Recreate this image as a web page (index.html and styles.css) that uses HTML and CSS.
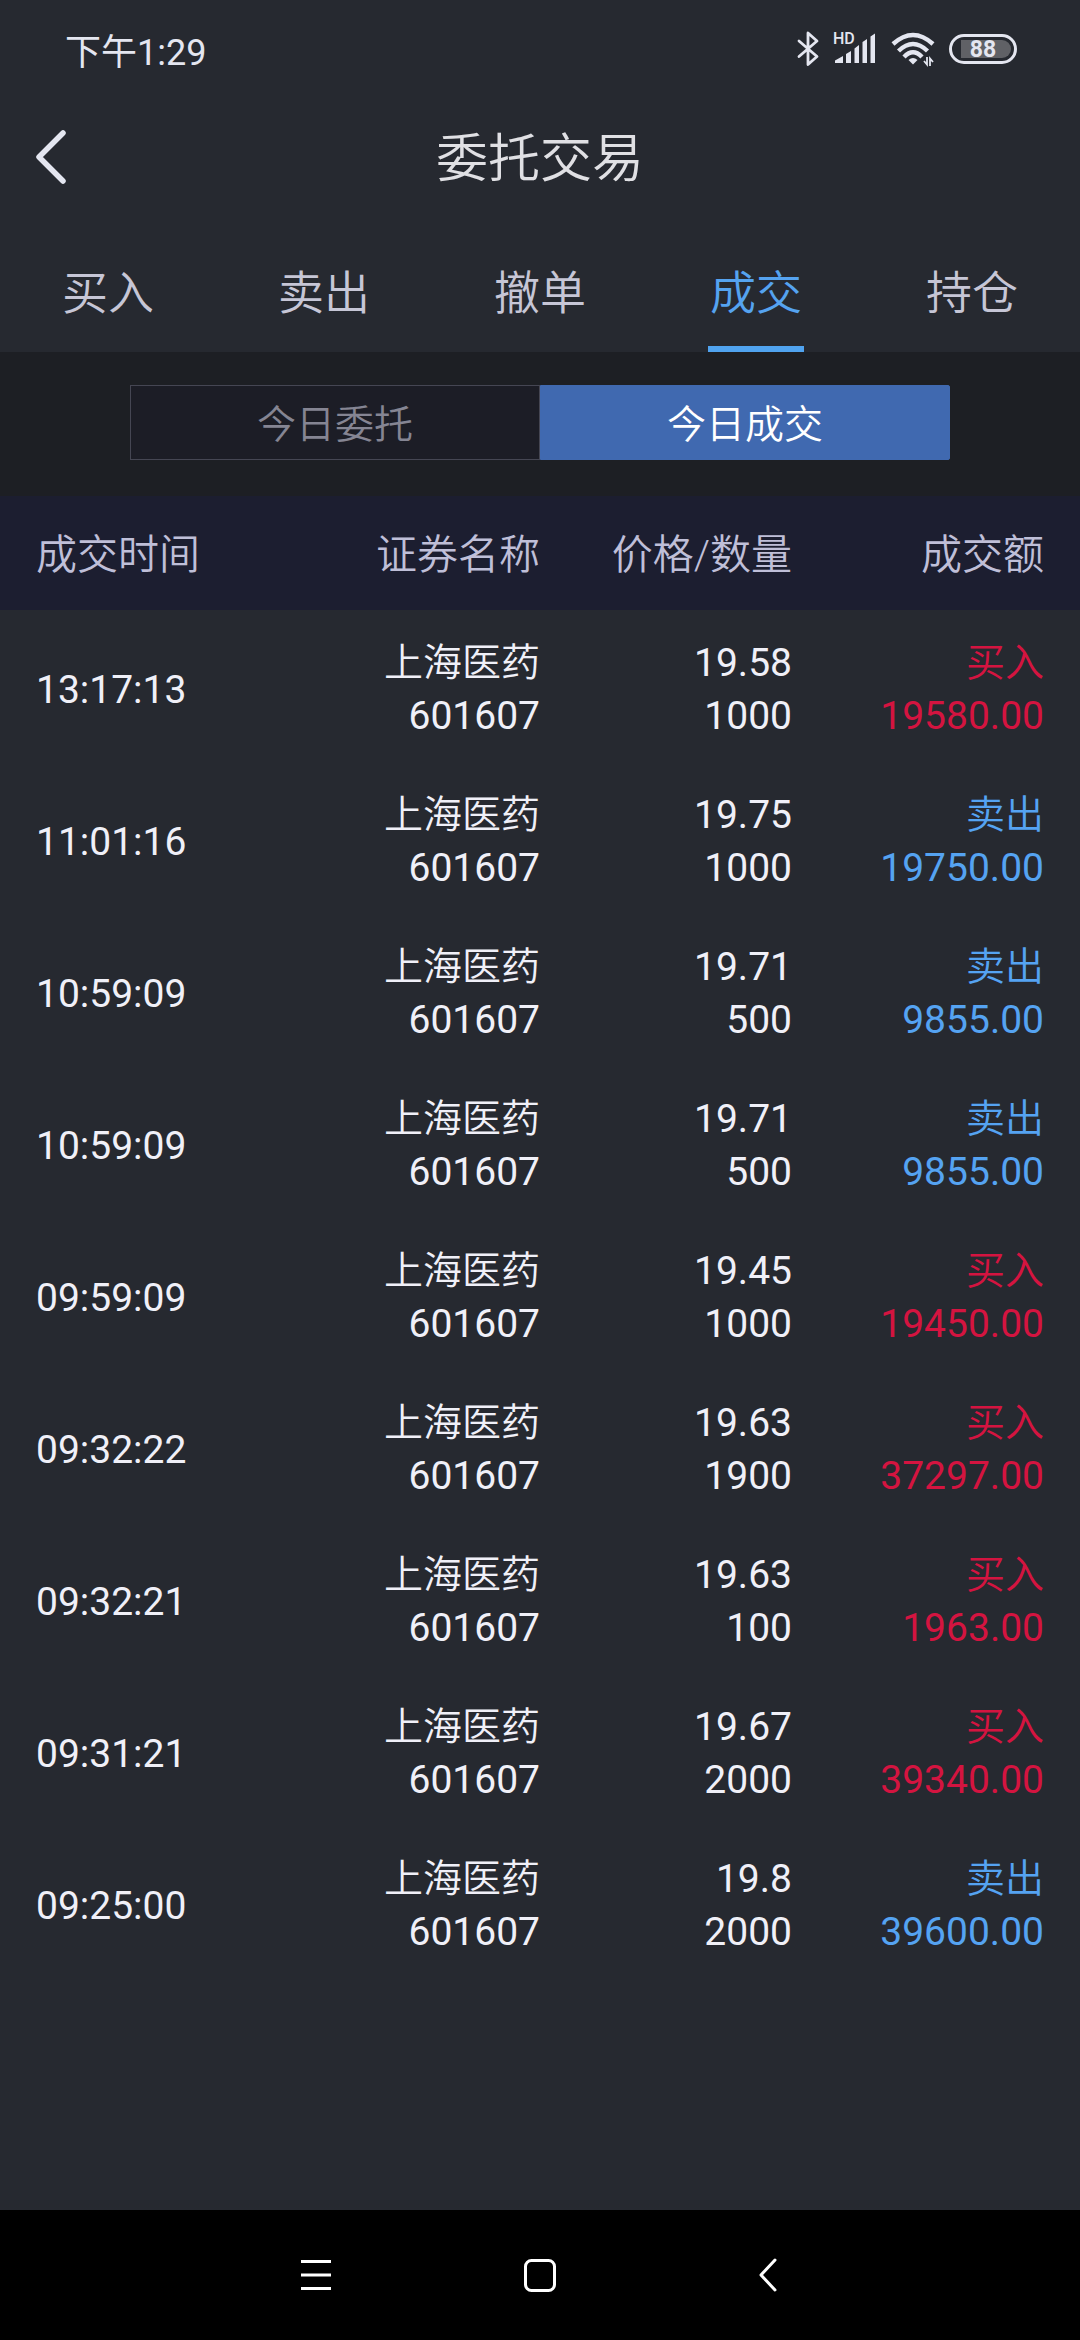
FILE: index.html
```
<!DOCTYPE html>
<html lang="zh-CN">
  <head>
    <meta charset="UTF-8" />
    <meta name="viewport" content="width=device-width, initial-scale=1.0" />
    <title>委托交易</title>
    <link rel="stylesheet" href="styles.css">
  </head>
  <body>
    <div class="status-bar">
      <span class="clock">下午1:29</span>
      <div class="status-icons">
        <!-- bluetooth -->
        <svg width="22" height="36" viewBox="0 0 22 36" fill="none" stroke="#e4e6f0" stroke-width="2.8" stroke-linejoin="round" stroke-linecap="round">
          <path d="M2 10 L20 25.500 L11 33.500 V2 L20 10 L2 25.500" />
        </svg>
        <!-- signal -->
        <svg width="44" height="36" viewBox="0 0 44 36" fill="#e4e6f0">
          <text class="hd" x="0" y="13">HD</text>
          <path d="M2 32 V29.500 L10 25 V32 Z M13 32 V23 L18 20 V32 Z M21.500 32 V17.500 L26 14 V32 Z M29.500 32 V11 L34 8 V32 Z M37.500 32 V5.500 L42 2.500 V32 Z" />
        </svg>
        <!-- wifi -->
        <svg width="44" height="36" viewBox="0 0 44 36" fill="none" stroke="#e4e6f0" stroke-width="4.4">
          <path d="M2 13 Q22 -5 42 13 M7.500 20 Q22 6 36.500 20 M13 26 Q22 16.500 31 26" />
          <path d="M17.500 29 Q22 25 26.500 29 L22 33.500 Z" fill="#e4e6f0" stroke="none" />
          <path d="M33 30 L36 33.500 V26 M39 35 V27.500 L42 31" stroke-width="1.800" />
        </svg>
        <div class="battery"><span>88</span></div>
      </div>
    </div>

    <header class="title-bar">
      <button class="back" aria-label="返回">
        <svg width="32" height="56" viewBox="0 0 32 56" fill="none" stroke="#e4e6f0" stroke-width="5.500" stroke-linecap="round" stroke-linejoin="round">
          <path d="M28 4 L4 28 L28 52" />
        </svg>
      </button>
      <h1>委托交易</h1>
    </header>

    <nav class="tabs">
      <a href="#buy">买入</a>
      <a href="#sell">卖出</a>
      <a href="#cancel">撤单</a>
      <a href="#deal" class="active">成交</a>
      <a href="#hold">持仓</a>
    </nav>

    <div class="segment">
      <button>今日委托</button>
      <button class="active">今日成交</button>
    </div>

    <table class="deals">
      <thead>
        <tr>
          <th>成交时间</th>
          <th>证券名称</th>
          <th>价格/数量</th>
          <th>成交额</th>
        </tr>
      </thead>
      <tbody>
        <tr class="buy">
          <td>13:17:13</td>
          <td><span class="name">上海医药</span>601607</td>
          <td>19.58<br>1000</td>
          <td><span class="name">买入</span>19580.00</td>
        </tr>
        <tr class="sell">
          <td>11:01:16</td>
          <td><span class="name">上海医药</span>601607</td>
          <td>19.75<br>1000</td>
          <td><span class="name">卖出</span>19750.00</td>
        </tr>
        <tr class="sell">
          <td>10:59:09</td>
          <td><span class="name">上海医药</span>601607</td>
          <td>19.71<br>500</td>
          <td><span class="name">卖出</span>9855.00</td>
        </tr>
        <tr class="sell">
          <td>10:59:09</td>
          <td><span class="name">上海医药</span>601607</td>
          <td>19.71<br>500</td>
          <td><span class="name">卖出</span>9855.00</td>
        </tr>
        <tr class="buy">
          <td>09:59:09</td>
          <td><span class="name">上海医药</span>601607</td>
          <td>19.45<br>1000</td>
          <td><span class="name">买入</span>19450.00</td>
        </tr>
        <tr class="buy">
          <td>09:32:22</td>
          <td><span class="name">上海医药</span>601607</td>
          <td>19.63<br>1900</td>
          <td><span class="name">买入</span>37297.00</td>
        </tr>
        <tr class="buy">
          <td>09:32:21</td>
          <td><span class="name">上海医药</span>601607</td>
          <td>19.63<br>100</td>
          <td><span class="name">买入</span>1963.00</td>
        </tr>
        <tr class="buy">
          <td>09:31:21</td>
          <td><span class="name">上海医药</span>601607</td>
          <td>19.67<br>2000</td>
          <td><span class="name">买入</span>39340.00</td>
        </tr>
        <tr class="sell">
          <td>09:25:00</td>
          <td><span class="name">上海医药</span>601607</td>
          <td>19.8<br>2000</td>
          <td><span class="name">卖出</span>39600.00</td>
        </tr>
      </tbody>
    </table>

    <footer class="nav-bar">
      <button aria-label="菜单">
        <svg width="36" height="36" viewBox="0 0 36 36" stroke="#fff" stroke-width="3">
          <path d="M5 4.500 H35 M5 18 H35 M5 31.500 H35" />
        </svg>
      </button>
      <button aria-label="主页">
        <svg width="36" height="36" viewBox="0 0 36 36" fill="none" stroke="#fff" stroke-width="3">
          <rect x="3.500" y="3.500" width="29" height="30" rx="6" />
        </svg>
      </button>
      <button aria-label="返回">
        <svg width="36" height="36" viewBox="0 0 36 36" fill="none" stroke="#fff" stroke-width="3" stroke-linecap="round" stroke-linejoin="round">
          <path d="M27 3 L13 18 L27 33" />
        </svg>
      </button>
    </footer>
  </body>
</html>
```
FILE: styles.css
```
* {
  box-sizing: border-box;
}
body {
  margin: 0;
  min-height: 100vh;
  display: flex;
  flex-direction: column;
  background-color: #262930;
  color: #f0f0f8;
  font-family: Roboto, "Noto Sans CJK SC", sans-serif;
  font-size: 39px;
}
button {
  border: none;
  padding: 0;
  background: none;
  font-family: inherit;
  color: inherit;
  cursor: pointer;
}
svg {
  display: block;
}

/* phone status bar */
.status-bar {
  display: flex;
  justify-content: space-between;
  align-items: center;
  height: 98px;
  padding: 0 63px 0 65px;
  color: #e4e6f0;
}
.clock {
  font-size: 36px;
}
.status-icons {
  display: flex;
  align-items: center;
  gap: 14px;
}
.status-icons svg {
  overflow: visible;
}
.hd {
  font-size: 16px;
  font-weight: 500;
}
.battery {
  width: 68px;
  height: 30px;
  padding: 3px;
  border: 3px solid #e4e6f0;
  border-radius: 15px;
}
.battery span {
  display: block;
  height: 18px;
  margin-left: 6px;
  padding-right: 6px;
  border-radius: 0 9px 9px 0;
  background-color: #606166;
  font-size: 23px;
  font-weight: 700;
  line-height: 20px;
  text-align: center;
}

.title-bar {
  position: relative;
  height: 118px;
}
.title-bar h1 {
  margin: 0;
  color: #e0e0e4;
  font-size: 52px;
  font-weight: 350;
  line-height: 124px;
  text-align: center;
}
.back {
  position: absolute;
  top: 31px;
  left: 35px;
}

.tabs {
  display: flex;
  height: 136px;
}
.tabs a {
  flex: 1;
  display: flex;
  flex-direction: column;
  align-items: center;
  justify-content: space-between;
  padding-top: 42px;
  color: #c6c6d6;
  font-size: 46px;
  font-weight: 350;
  line-height: 70px;
  text-decoration: none;
}
.tabs .active {
  color: #55a3f0;
}
.tabs .active::after {
  content: "";
  width: 96px;
  height: 6px;
  background-color: #50a3ef;
}

.segment {
  display: flex;
  padding: 33px 130px 36px;
  background-color: #1d1f24;
}
.segment button {
  flex: 1;
  height: 75px;
  padding-bottom: 3px;
  border: 1px solid #454653;
  background-color: #1c1d26;
  color: #858593;
  font-size: 39px;
  font-weight: 350;
}
.segment .active {
  border-color: #4069b0;
  border-radius: 0 2px 2px 0;
  background-color: #4069b0;
  color: #fff;
}

/* deal list */
.deals {
  display: block;
  flex: 1;
}
.deals thead,
.deals tbody {
  display: block;
}
.deals tr {
  display: grid;
  grid-template-columns: repeat(4, 1fr);
  align-items: center;
  padding: 0 36px;
}
.deals thead tr {
  height: 114px;
  padding-bottom: 5px;
  background-color: #1c1e30;
}
.deals tbody {
  padding-top: 4px;
}
.deals tbody tr {
  height: 152px;
}
.deals th,
.deals td {
  padding: 0;
  text-align: right;
  white-space: nowrap;
}
.deals th:first-child,
.deals td:first-child {
  text-align: left;
}
.deals th {
  color: #bfbfd8;
  font-size: 41px;
  font-weight: 350;
}
.deals td {
  line-height: 53px;
}
.name {
  display: block;
  font-weight: 350;
}
.buy td:last-child {
  color: #d41440;
}
.sell td:last-child {
  color: #55a3f2;
}

.nav-bar {
  display: flex;
  justify-content: center;
  height: 130px;
  background-color: #000;
}
.nav-bar button {
  display: flex;
  align-items: center;
  justify-content: center;
  width: 226px;
}
```
